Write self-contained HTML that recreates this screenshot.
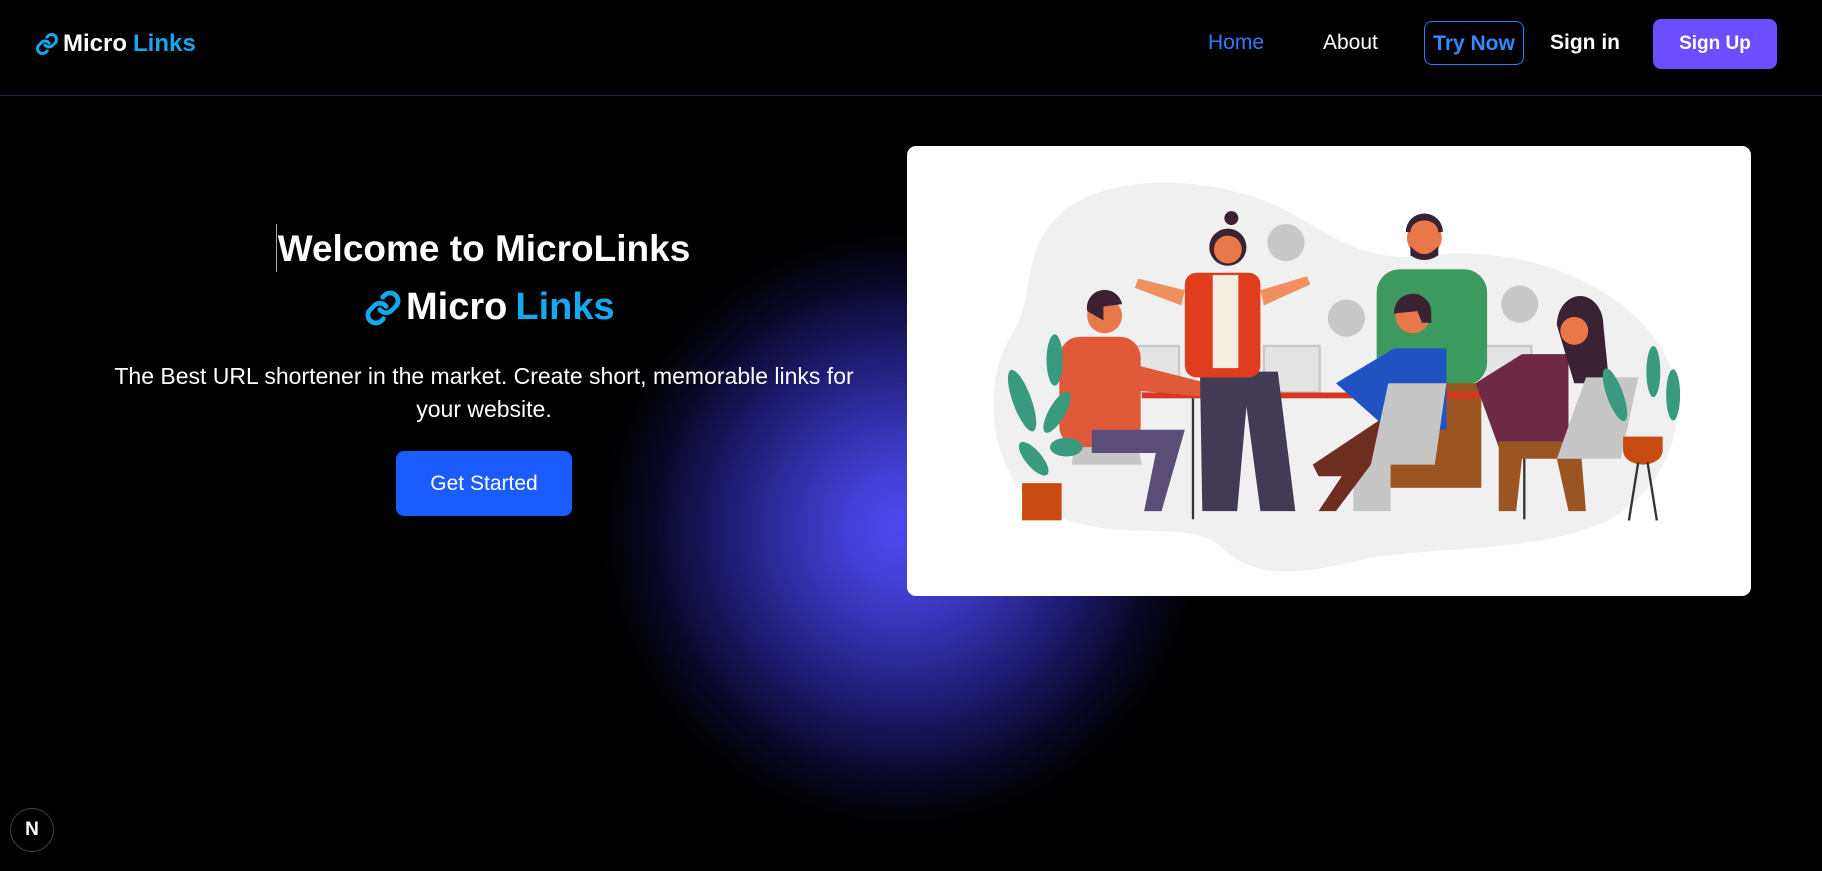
<!DOCTYPE html>
<html><head><meta charset="utf-8"><style>
html,body{margin:0;padding:0;background:#000;width:1822px;height:871px;overflow:hidden;font-family:"Liberation Sans",sans-serif;color:#fff}
.glow{position:absolute;left:593px;top:219px;width:620px;height:620px;border-radius:50%;background:radial-gradient(circle closest-side at 50% 50%,#4b48ec 0%,#4240d6 18%,#302ca0 40%,#1c1868 60%,#0a0828 80%,#020208 92%,#000 100%)}
header{position:absolute;left:0;top:0;width:1822px;height:95px;border-bottom:1px solid #1b2a4a}
.logo{position:absolute;display:flex;align-items:center;font-weight:bold}
.nav a{position:absolute;top:31px;font-size:21px;text-decoration:none}
.tn{position:absolute;left:1424px;top:21px;width:100px;height:44px;border:1px solid #2f7bff;border-radius:8px;color:#2f8bff;font-weight:bold;font-size:21px;text-align:center;line-height:44px;box-sizing:border-box}
.su{position:absolute;left:1653px;top:19px;width:124px;height:50px;background:#6c4dff;border-radius:8px;font-weight:bold;font-size:19px;text-align:center;line-height:50px}
h1{position:absolute;left:0;width:968px;top:228px;margin:0;text-align:center;font-size:37px;font-weight:bold}
.cursor{position:absolute;left:276px;top:224px;width:1px;height:48px;background:#aaa}
p.d{position:absolute;left:99px;width:770px;top:360px;margin:0;text-align:center;font-size:23px;line-height:33px}
.gs{position:absolute;left:396px;top:451px;width:176px;height:65px;background:#1a5cff;border-radius:8px;font-size:21px;text-align:center;line-height:65px}
.card{position:absolute;left:907px;top:146px;width:844px;height:450px;background:#fff;border-radius:9px;overflow:hidden}
.n{position:absolute;left:10px;top:808px;width:44px;height:44px;border-radius:50%;background:#000;border:1px solid #444;box-sizing:border-box;text-align:center;line-height:42px;font-size:19px;font-weight:bold}
</style></head><body>
<div class="glow"></div>
<header>
<div class="logo" style="left:35px;top:30px;font-size:24px">
<svg width="24" height="26" viewBox="0 0 24 24" fill="none" stroke="#14a8f0" stroke-width="3" stroke-linecap="round"><path d="M10 13a5 5 0 0 0 7.5.5l3-3a5 5 0 0 0-7-7l-1.7 1.7"/><path d="M14 11a5 5 0 0 0-7.5-.5l-3 3a5 5 0 0 0 7 7l1.7-1.7"/></svg>
<span style="margin-left:4px">Micro</span><span style="color:#14a8f0;margin-left:6px">Links</span></div>
<div class="nav"><a style="left:1208px;color:#2f7bff">Home</a><a style="left:1323px;color:#fff">About</a></div>
<div class="tn">Try Now</div>
<a style="position:absolute;left:1550px;top:31px;font-size:21px;font-weight:bold;color:#fff">Sign in</a>
<div class="su">Sign Up</div>
</header>
<div class="cursor"></div>
<h1>Welcome to MicroLinks</h1>
<div class="logo" style="left:364px;top:286px;font-size:38px">
<svg width="38" height="40" viewBox="0 0 24 24" fill="none" stroke="#14a8f0" stroke-width="3" stroke-linecap="round"><path d="M10 13a5 5 0 0 0 7.5.5l3-3a5 5 0 0 0-7-7l-1.7 1.7"/><path d="M14 11a5 5 0 0 0-7.5-.5l-3 3a5 5 0 0 0 7 7l1.7-1.7"/></svg>
<span style="margin-left:4px">Micro</span><span style="color:#14a8f0;margin-left:8px">Links</span></div>
<p class="d">The Best URL shortener in the market. Create short, memorable links for your website.</p>
<div class="gs">Get Started</div>
<div class="card">
<svg width="844" height="450" viewBox="781 126 726 387">
<path d="M900 200 C930 150 1020 150 1080 170 C1130 185 1160 230 1230 220 C1320 210 1400 250 1430 300 C1460 350 1440 420 1380 450 C1320 475 1250 470 1180 480 C1120 495 1080 500 1050 470 C1020 445 960 470 900 440 C850 410 845 330 870 290 C890 260 880 230 900 200Z" fill="#f0f0f0"/>
<g fill="#c8c8c8"><circle cx="1107" cy="209" r="16"/><circle cx="1159" cy="274" r="16"/><circle cx="1308" cy="262" r="16"/></g>
<g fill="#e4e4e4" stroke="#c8c8c8" stroke-width="2"><rect x="975" y="298" width="40" height="40"/><rect x="1088" y="298" width="48" height="40"/><rect x="1258" y="298" width="60" height="40"/></g>
<rect x="1185" y="232" width="95" height="100" rx="20" fill="#3d9a5e"/>
<rect x="1195" y="330" width="80" height="90" fill="#9a5522"/>
<circle cx="1226" cy="205" r="15" fill="#e8784a"/><path d="M1210 200 a16 16 0 0 1 32 0 l-4 0 a12 10 0 0 0-24 0z" fill="#3a2233"/><path d="M1214 212 q12 14 24 0 l0 8 q-12 8 -24 0z" fill="#3a2233"/>
<rect x="1165" y="400" width="32" height="40" fill="#c6c6c6"/>
<rect x="983" y="338" width="357" height="5" fill="#d8361e"/>
<g stroke="#333" stroke-width="2"><line x1="1027" y1="343" x2="1027" y2="447"/><line x1="1312" y1="343" x2="1312" y2="447"/></g>
<path d="M928 325 h40 l15 75 h-60z" fill="#c6c6c6"/>
<rect x="912" y="290" width="70" height="95" rx="18" fill="#e05a3a"/>
<path d="M960 310 l80 20 v12 l-85 -8z" fill="#e05a3a"/>
<path d="M940 370 h80 l-20 70 h-15 l10 -50 h-55z" fill="#5a4e78"/>
<circle cx="951" cy="272" r="15" fill="#e8784a"/><path d="M936 268 a15 15 0 0 1 30 -6 l-16 2 v12z" fill="#3a2233"/>
<path d="M1033 320 h67 l15 120 h-30 l-12 -90 l-8 90 h-30z" fill="#433a56"/>
<rect x="1020" y="235" width="65" height="90" rx="10" fill="#e03c1e"/>
<rect x="1044" y="237" width="22" height="80" fill="#f4ede2"/>
<path d="M1020 250 l-40 -10 l-3 8 l40 15z M1085 250 l40 -12 l3 7 l-40 18z" fill="#f09060"/>
<circle cx="1057" cy="213" r="16" fill="#3a2233"/><circle cx="1057" cy="215" r="12" fill="#e8784a"/><circle cx="1060" cy="188" r="6" fill="#3a2233"/>
<path d="M1130 400 l60 -40 h30 l-40 40 l-30 40 h-15 l20 -30 h-20z" fill="#6e2e22"/>
<path d="M1150 330 l50 -30 h45 v70 h-50z" fill="#2152c4"/>
<circle cx="1216" cy="272" r="15" fill="#e8784a"/><path d="M1200 270 a16 16 0 0 1 32 -2 v10 h-8 l-4 -10z" fill="#3a2233"/>
<path d="M1195 330 h50 l-10 70 h-55z" fill="#c6c6c6"/>
<path d="M1270 330 l40 -25 h40 v80 h-60z" fill="#6e2a45"/>
<path d="M1290 380 h70 l5 60 h-15 l-10 -45 h-30 l-5 45 h-15z" fill="#9a5522"/>
<path d="M1340 280 a20 25 0 0 1 40 0 l5 50 h-30z" fill="#3a2233"/><circle cx="1355" cy="285" r="12" fill="#e8784a"/>
<path d="M1365 325 h45 l-15 70 h-55z" fill="#c6c6c6"/>
<g fill="#3a9a80"><ellipse cx="880" cy="345" rx="8" ry="28" transform="rotate(-20 880 345)"/><ellipse cx="908" cy="310" rx="7" ry="22"/><ellipse cx="910" cy="355" rx="7" ry="20" transform="rotate(30 910 355)"/><ellipse cx="890" cy="395" rx="7" ry="18" transform="rotate(-40 890 395)"/><ellipse cx="918" cy="385" rx="14" ry="8"/>
<ellipse cx="1390" cy="340" rx="7" ry="24" transform="rotate(-20 1390 340)"/><ellipse cx="1423" cy="320" rx="6" ry="22"/><ellipse cx="1440" cy="340" rx="6" ry="22"/></g>
<rect x="880" y="416" width="34" height="32" fill="#c84a10"/>
<path d="M1397 376 h34 v12 a17 12 0 0 1-34 0z" fill="#c84a10"/>
<g stroke="#333" stroke-width="2"><line x1="1410" y1="398" x2="1402" y2="448"/><line x1="1418" y1="398" x2="1426" y2="448"/></g>
</svg>
</div>
<div class="n">N</div>
</body></html>
